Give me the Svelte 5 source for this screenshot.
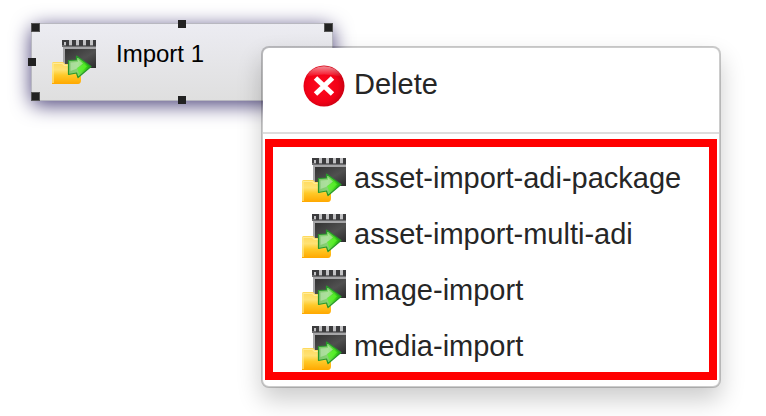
<script>
  const handles = ['nw corner', 'n', 'ne corner', 'w', 'e', 'sw corner', 's', 'se corner'];
  const actions = ['asset-import-adi-package', 'asset-import-multi-adi', 'image-import', 'media-import'];
</script>

{#snippet importIcon()}
  <svg class="icon" viewBox="0 0 44 44" aria-hidden="true">
    <defs>
      <linearGradient id="film" x1="0" y1="0" x2="1" y2="1">
        <stop offset="0" stop-color="#333" />
        <stop offset=".55" stop-color="#505050" />
        <stop offset="1" stop-color="#2b2b2b" />
      </linearGradient>
      <linearGradient id="folder" x1="0" y1="0" x2="0" y2="1">
        <stop offset="0" stop-color="#ffd95c" />
        <stop offset=".35" stop-color="#ffe274" />
        <stop offset=".6" stop-color="#ffc928" />
        <stop offset="1" stop-color="#ffa800" />
      </linearGradient>
      <linearGradient id="arrow" x1="0" y1="0" x2="1" y2="0">
        <stop offset="0" stop-color="#7fc46e" />
        <stop offset=".4" stop-color="#86d472" />
        <stop offset=".7" stop-color="#45dc1e" />
        <stop offset="1" stop-color="#1bab0b" />
      </linearGradient>
    </defs>
    <path d="M10 0H44V7H10Z" fill="#c2c2c4" />
    <path d="M10 5H44V7H10Z" fill="#6c6c6e" />
    <path d="M10 0h4v2h-2v3h-2zM14 0h3v6h-3zM20 0h4v6h-4zM27 0h4v6h-4zM34 0h4v6h-4zM41 0h3v6h-3z" fill="#3c3c3e" />
    <path d="M11 7H44V28H11Z" fill="#a6a6a8" />
    <path d="M13 9H44V28H13Z" fill="url(#film)" />
    <path d="M0 23.5Q0 22 1.500 22H11L13 24H26Q29 24 29 26V40Q29 44 26 44H0Z" fill="url(#folder)" />
    <path d="M1 43V23.500H10.500L12.500 25.500H16" fill="none" stroke="#ffeb96" stroke-width="1.200" />
    <path d="M16.500 20.500L24.500 20V16L39 26.500L26 37.500L24.500 33L16.500 34.500Z" fill="url(#arrow)" stroke="#28982a" stroke-width="1.200" stroke-linejoin="round" />
    <path d="M18.500 22.500L26 22V19.500L31 23.500L24 29L18.500 31Z" fill="#d2eec5" opacity=".5" />
    <path d="M25 28L32 24L35 26.500L27.500 33.500Z" fill="#5cf52c" opacity=".7" />
  </svg>
{/snippet}

<main>
  <section class="node" aria-label="Import 1">
    {@render importIcon()}
    <span class="title">Import 1</span>
    {#each handles as handle}
      <i class="handle {handle}"></i>
    {/each}
  </section>

  <div class="menu" role="menu">
    <div class="general">
      <button type="button" role="menuitem">
        <svg class="icon" viewBox="0 0 44 44" aria-hidden="true">
          <defs>
            <radialGradient id="red" cx=".45" cy=".5" r=".56">
              <stop offset="0" stop-color="#ff0c20" />
              <stop offset=".7" stop-color="#f20016" />
              <stop offset="1" stop-color="#c80012" />
            </radialGradient>
            <linearGradient id="gloss" x1="0" y1="0" x2="0" y2="1">
              <stop offset="0" stop-color="#fff" stop-opacity=".55" />
              <stop offset="1" stop-color="#fff" stop-opacity="0" />
            </linearGradient>
          </defs>
          <circle cx="22" cy="22" r="20.500" fill="url(#red)" />
          <path d="M4 13A20.500 20.500 0 0 1 40 13Q22 8 4 13Z" fill="url(#gloss)" />
          <path d="M13.500 14L30.500 30M30.500 14L13.500 30" stroke="#fff" stroke-width="5" />
        </svg>
        <span>Delete</span>
      </button>
    </div>
    <div class="imports" role="group" aria-label="Import actions">
      {#each actions as action}
        <button type="button" role="menuitem">
          {@render importIcon()}
          <span>{action}</span>
        </button>
      {/each}
    </div>
  </div>
</main>

<style>
  :global(body) {
    background: #fff;
  }

  main {
    position: relative;
    min-height: 100vh;
    overflow: hidden;
    font-family: "Liberation Sans", Arial, sans-serif;
  }

  .node {
    position: absolute;
    top: 23px;
    left: 31px;
    box-sizing: border-box;
    display: flex;
    align-items: flex-start;
    gap: 20px;
    width: 302px;
    height: 78px;
    padding: 16px 20px;
    border: 1px solid #b8b8c0;
    border-radius: 8px;
    background: linear-gradient(#ececf2, #dfdfdf);
    box-shadow: 0 4px 20px #4a4179;
  }

  .title {
    font-size: 24px;
    line-height: 28px;
    color: #000;
  }

  .icon {
    flex: none;
    display: block;
    width: 44px;
    height: 44px;
  }

  .handle {
    position: absolute;
    top: calc(50% - 4px);
    left: calc(50% - 4px);
    width: 8px;
    height: 8px;
    background: #222;
  }

  .corner {
    box-sizing: border-box;
    width: 9px;
    height: 9px;
    border: 1px solid #555;
  }

  .n { top: -4px; }
  .s { top: auto; bottom: -4px; }
  .w { left: -4px; }
  .e { left: auto; right: -4px; }
  .nw, .ne { top: -1px; }
  .sw, .se { top: auto; bottom: -1px; }
  .nw, .sw { left: -1px; }
  .ne, .se { left: auto; right: -1px; }

  .menu {
    position: absolute;
    top: 46px;
    left: 261px;
    border: 2px solid rgba(0, 0, 0, 0.2);
    border-radius: 8px;
    background: #fff;
    background-clip: padding-box;
    box-shadow: 0 12px 24px rgba(0, 0, 0, 0.2);
  }

  .general {
    padding: 16px 39px 24px;
    border-bottom: 2px solid #ddd;
  }

  .imports {
    display: flex;
    flex-direction: column;
    gap: 12px;
    margin: 5px 2px 6px;
    padding: 11px 28px 2px 29px;
    border: 8px solid #f00;
  }

  button {
    display: flex;
    align-items: center;
    gap: 8px;
    padding: 0;
    border: 0;
    background: none;
    color: #262626;
    font-family: inherit;
    font-size: 29px;
    line-height: 40px;
    white-space: nowrap;
    text-align: left;
    cursor: pointer;
  }

  button span {
    padding-bottom: 4px;
  }
</style>
